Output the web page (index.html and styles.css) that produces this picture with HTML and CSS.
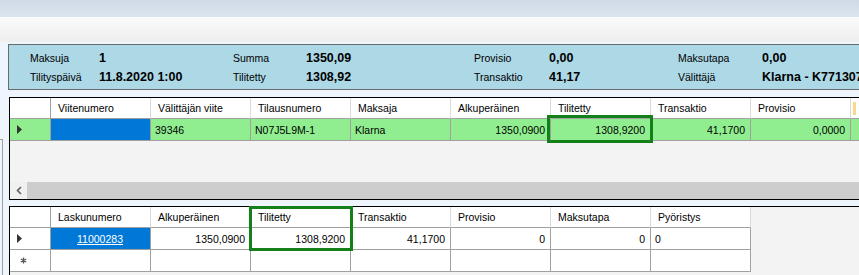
FILE: index.html
```html
<!DOCTYPE html>
<html lang="fi">

<head>
    <meta charset="UTF-8">
    <meta name="viewport" content="width=device-width, initial-scale=1.0">
    <title>Tilitys</title>

    <link rel="stylesheet" href="styles.css">
</head>

<body>
    <div class="titlebar"></div>
    <div class="toolbar"></div>

    <div class="main">
        <!-- Summary panel -->
        <div class="summary">
            <span>Maksuja</span>
            <span class="value">1</span>
            <span>Summa</span>
            <span class="value">1350,09</span>
            <span>Provisio</span>
            <span class="value">0,00</span>
            <span>Maksutapa</span>
            <span class="value">0,00</span>

            <span>Tilityspäivä</span>
            <span class="value">11.8.2020 1:00</span>
            <span>Tilitetty</span>
            <span class="value">1308,92</span>
            <span>Transaktio</span>
            <span class="value">41,17</span>
            <span>Välittäjä</span>
            <span class="value">Klarna - K7713070</span>
        </div>

        <div class="grids">
            <div class="side">
                <div class="side-frame"></div>
            </div>

            <div class="stack">
                <!-- Payments grid -->
                <div class="grid grid-top">
                    <div class="row head">
                        <div class="cell rh"></div>
                        <div class="cell">Viitenumero</div>
                        <div class="cell">Välittäjän viite</div>
                        <div class="cell">Tilausnumero</div>
                        <div class="cell">Maksaja</div>
                        <div class="cell">Alkuperäinen</div>
                        <div class="cell">Tilitetty</div>
                        <div class="cell">Transaktio</div>
                        <div class="cell">Provisio</div>
                        <div class="cell hot"><span class="hot-mark"></span></div>
                    </div>
                    <div class="row green">
                        <div class="cell rh">
                            <svg class="arrow-right" width="5" height="9" viewBox="0 0 5 9"><polygon points="0,0 5,4.5 0,9" /></svg>
                        </div>
                        <div class="cell sel"></div>
                        <div class="cell">39346</div>
                        <div class="cell">N07J5L9M-1</div>
                        <div class="cell">Klarna</div>
                        <div class="cell num">1350,0900</div>
                        <div class="cell num focus">1308,9200</div>
                        <div class="cell num">41,1700</div>
                        <div class="cell num">0,0000</div>
                        <div class="cell"></div>
                    </div>
                    <div class="empty"></div>
                    <div class="hscroll">
                        <div class="scroll-btn">
                            <svg width="6" height="9" viewBox="0 0 6 9"><polyline points="5,1 1.5,4.5 5,8" /></svg>
                        </div>
                        <div class="thumb"></div>
                    </div>
                </div>

                <div class="splitter"></div>

                <!-- Invoices grid -->
                <div class="grid grid-bottom">
                    <div class="row head">
                        <div class="cell rh"></div>
                        <div class="cell">Laskunumero</div>
                        <div class="cell">Alkuperäinen</div>
                        <div class="cell">Tilitetty</div>
                        <div class="cell">Transaktio</div>
                        <div class="cell">Provisio</div>
                        <div class="cell">Maksutapa</div>
                        <div class="cell">Pyöristys</div>
                    </div>
                    <div class="row white">
                        <div class="cell rh">
                            <svg class="arrow-right" width="5" height="9" viewBox="0 0 5 9"><polygon points="0,0 5,4.5 0,9" /></svg>
                        </div>
                        <div class="cell sel link">11000283</div>
                        <div class="cell num">1350,0900</div>
                        <div class="cell num">1308,9200</div>
                        <div class="cell num">41,1700</div>
                        <div class="cell num">0</div>
                        <div class="cell num">0</div>
                        <div class="cell">0</div>
                    </div>
                    <div class="row white">
                        <div class="cell rh">
                            <svg class="new-row" width="7" height="7" viewBox="0 0 7 7">
                                <path d="M3.5 0.5v6M0.8 2l5.4 3M0.8 5l5.4-3" />
                            </svg>
                        </div>
                        <div class="cell"></div>
                        <div class="cell"></div>
                        <div class="cell"></div>
                        <div class="cell"></div>
                        <div class="cell"></div>
                        <div class="cell"></div>
                        <div class="cell"></div>
                    </div>
                    <div class="frame"></div>
                </div>
            </div>
        </div>
    </div>
</body>

</html>
```

FILE: styles.css
```css
body {
    font-family: "Liberation Sans", Arial, sans-serif;
    font-size: 10.5px;
    color: #000;
    margin: 0;
    padding: 0;
    width: 859px;
    height: 275px;
    overflow: hidden;
    background-color: #eef5fc;
}

.titlebar {
    height: 17px;
    background: linear-gradient(#cfdae6, #dce5ef);
}

.toolbar {
    height: 25px;
    background: linear-gradient(#fbfbfb, #eeeeee);
}

.main {
    padding-top: 2px;
}

/* Summary panel */

.summary {
    box-sizing: border-box;
    width: 900px;
    height: 46px;
    margin: 0 0 7px 8px;
    padding: 3px 0 0 21px;
    border: 1px solid #6b6b6b;
    background-color: #add8e6;
    display: grid;
    grid-template-columns: 69px 134px 73px 168px 75px 129px 84px 1fr;
    grid-auto-rows: 19px;
    align-items: center;
    white-space: nowrap;
}

.summary .value {
    font-size: 12.5px;
    font-weight: bold;
}

/* Grids */

.grids {
    display: flex;
}

.side {
    width: 9px;
    flex: none;
}

.side-frame {
    width: 2px;
    height: 200px;
    margin-top: 42px;
    border-top: 1px solid #a0a0a0;
    border-right: 1px solid #a0a0a0;
}

.stack {
    width: 1000px;
    flex: none;
}

.grid {
    box-sizing: border-box;
    border: 1px solid #000;
    background-color: #f3f3f3;
}

.grid-top {
    height: 103px;
    display: flex;
    flex-direction: column;
}

.grid-bottom {
    height: 80px;
    position: relative;
}

.row {
    display: flex;
    flex: none;
}

.cell {
    box-sizing: border-box;
    width: 100px;
    height: 22px;
    flex: none;
    padding: 0 5px 0 4px;
    border-right: 1px solid #a0a0a0;
    border-bottom: 1px solid #a0a0a0;
    display: flex;
    align-items: center;
    white-space: nowrap;
    overflow: hidden;
}

.head .cell {
    height: 21px;
    padding-left: 7px;
    background-color: #fff;
    border-right-color: #dadada;
}

.cell.rh {
    width: 41px;
    padding: 0 0 0 7px;
    background-color: #fff;
    border-right-color: #a0a0a0;
}

.green .cell {
    background-color: #90ee90;
}

.white .cell {
    background-color: #fff;
}

.row .cell.sel {
    background-color: #0078d7;
}

.num {
    justify-content: flex-end;
}

.link {
    color: #fff;
    text-decoration: underline;
    justify-content: center;
}

.arrow-right {
    fill: #333;
}

.new-row {
    stroke: #555;
    stroke-width: 1.3;
    margin-left: 3px;
}

.head .cell.hot {
    padding-left: 2px;
}

.hot-mark {
    width: 3px;
    height: 13px;
    background-color: #fcd68c;
}

/* Focus outline around the Tilitetty cells */

.focus {
    position: relative;
    overflow: visible;
}

.focus::after {
    content: "";
    position: absolute;
    left: -4px;
    top: -4px;
    right: -3px;
    bottom: -3px;
    border: 3px solid #13801a;
}

.frame {
    position: absolute;
    left: 239px;
    top: -1px;
    width: 104px;
    height: 45px;
    box-sizing: border-box;
    border: 3px solid #13801a;
}

.empty {
    flex: 1;
}

.hscroll {
    height: 17px;
    flex: none;
    display: flex;
    background-color: #f0f0f0;
}

.scroll-btn {
    width: 17px;
    display: flex;
    align-items: center;
    justify-content: center;
}

.scroll-btn polyline {
    fill: none;
    stroke: #606060;
    stroke-width: 1.6;
}

.thumb {
    flex: 1;
    background-color: #cdcdcd;
}

.splitter {
    height: 6px;
}
```
